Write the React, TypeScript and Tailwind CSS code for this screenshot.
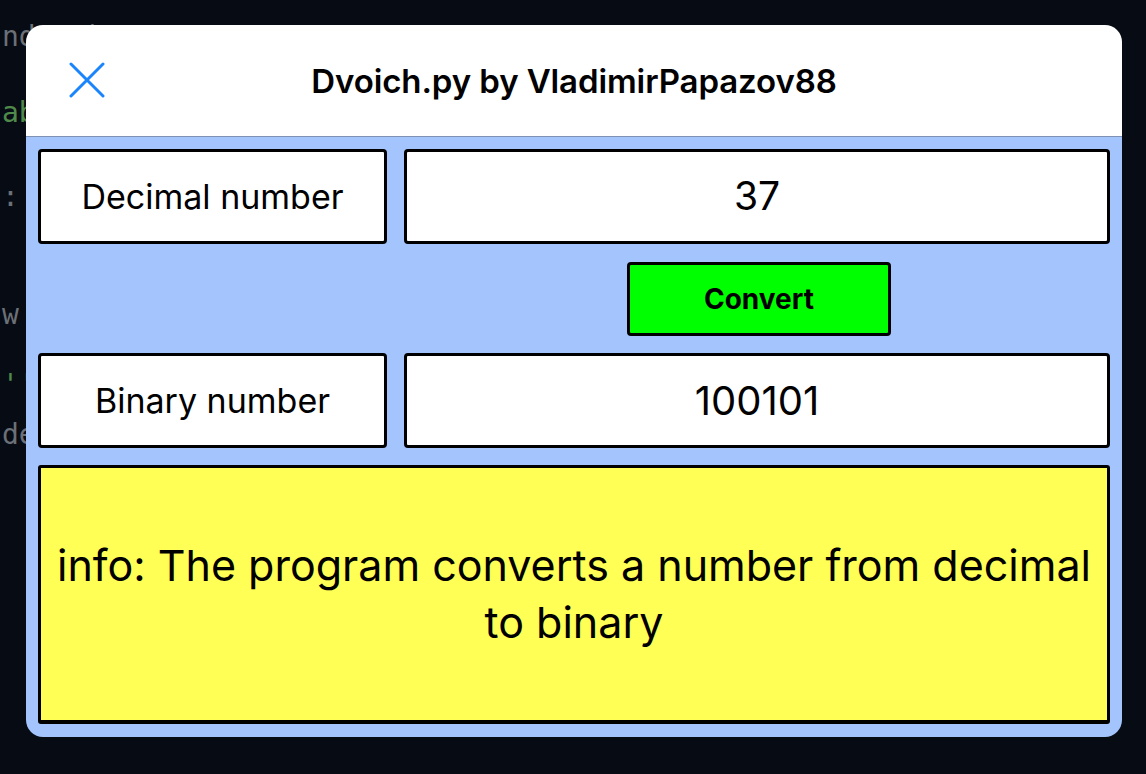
import React from 'react';

const codeLines = [
  { text: 'nd   )', top: 'pt-[18px]', color: 'text-[#6c7077]' },
  { text: 'ab', top: 'pt-[38px]', color: 'text-[#4f8a4a]' },
  { text: ':', top: 'pt-[46px]', color: 'text-[#6c7077]' },
  { text: 'w', top: 'pt-[80px]', color: 'text-[#6c7077]' },
  { text: "''", top: 'pt-[32px]', color: 'text-[#4f8a4a]' },
  { text: 'de', top: 'pt-[12px]', color: 'text-[#6c7077]' },
];

function CloseIcon() {
  return (
    <svg width="36" height="36" viewBox="0 0 36 36" fill="none">
      <path d="M2 2 L34 34 M34 2 L2 34" stroke="#1a84fb" strokeWidth="3" strokeLinecap="round" />
    </svg>
  );
}

function Cell({ children, className = '' }: { children: React.ReactNode; className?: string }) {
  return (
    <div
      className={`h-[95px] flex items-center justify-center bg-white border-[3px] border-black rounded-[4px] text-black ${className}`}
    >
      {children}
    </div>
  );
}

export default function App() {
  return (
    <div className="relative w-[1146px] h-[774px] overflow-hidden bg-[#070b14] font-['Inter',sans-serif]">
      {/* editor text behind the sheet */}
      <div className="flex flex-col pl-[2px] font-['DejaVu_Sans_Mono',monospace] text-[28px] leading-[38px] whitespace-pre">
        {codeLines.map((l, i) => (
          <div key={i} className={`${l.top} ${l.color}`}>
            {l.text}
          </div>
        ))}
      </div>

      {/* modal sheet */}
      <div className="absolute left-[26px] top-[25px] w-[1096px] rounded-[17px] overflow-hidden flex flex-col">
        <div className="h-[111px] bg-white flex items-center relative">
          <button className="ml-[43px] mt-[-1px] flex items-center justify-center">
            <CloseIcon />
          </button>
          <h1 className="absolute inset-x-0 text-center text-[33px] mt-[3px] font-semibold tracking-[-0.1px] text-black pointer-events-none">
            Dvoich.py by VladimirPapazov88
          </h1>
        </div>
        <div className="h-px bg-[#7f92b4]" />
        <div className="bg-[#a3c4fd] px-[12px] pt-[12px] pb-[13px] grid grid-cols-[349px_706px] gap-x-[17px]">
          <Cell className="text-[34px]">Decimal number</Cell>
          <Cell className="text-[39px]">37</Cell>

          <div className="col-start-2 flex justify-center pt-[18px] pb-[17px]">
            <button className="w-[264px] h-[74px] ml-[4px] bg-[#00ff00] border-[3px] border-black rounded-[4px] text-[28px] font-bold text-black">
              Convert
            </button>
          </div>

          <Cell className="text-[34px]">Binary number</Cell>
          <Cell className="text-[40px]">100101</Cell>

          <div className="col-span-2 mt-[17px] h-[259px] bg-[#ffff55] border-[3px] border-b-[4px] border-black rounded-[3px] flex items-center justify-center px-[8px]">
            <p className="text-[43px] leading-[57px] text-center text-black">
              info: The program converts a number from decimal to binary
            </p>
          </div>
        </div>
      </div>
    </div>
  );
}
